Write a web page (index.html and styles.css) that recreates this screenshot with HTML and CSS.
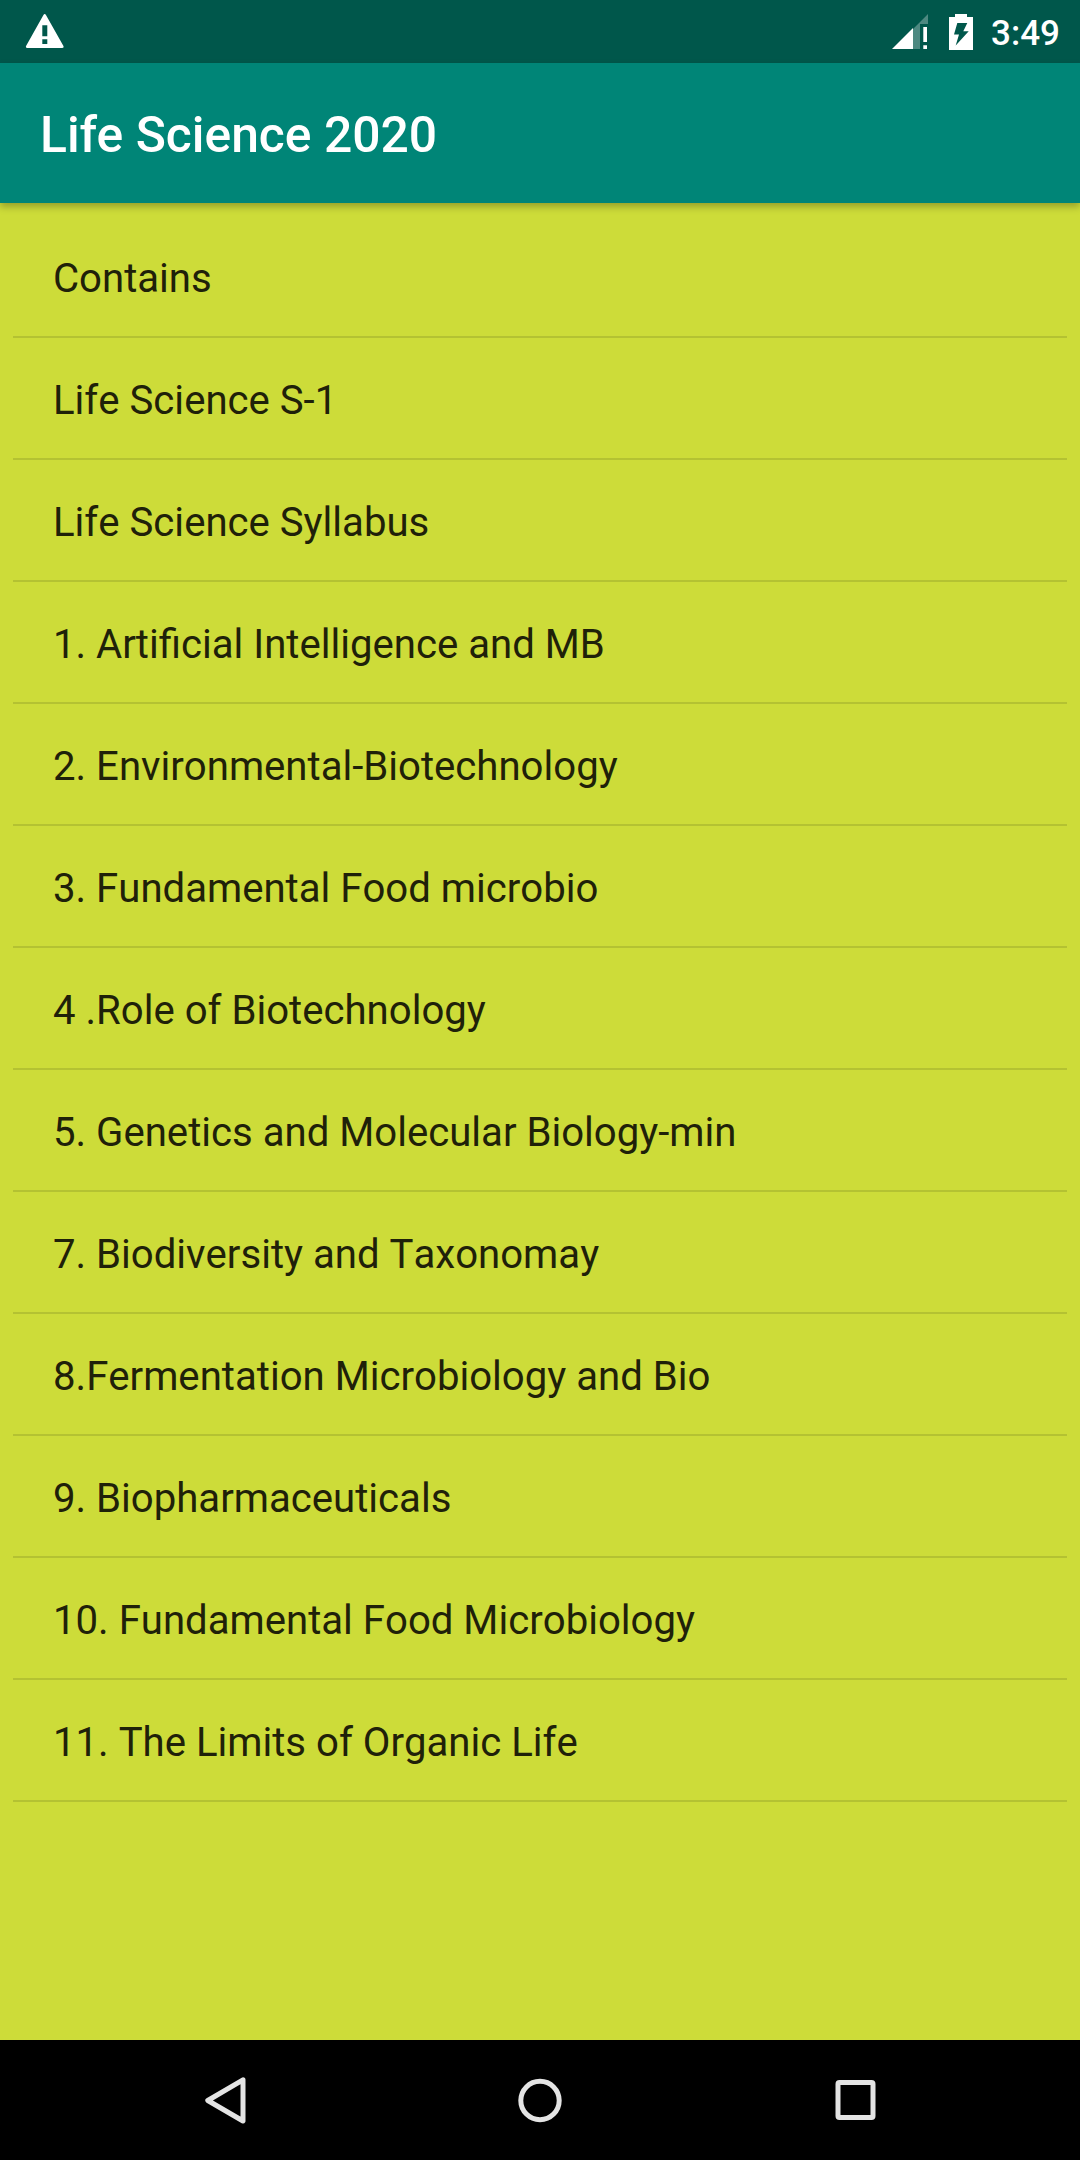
FILE: index.html
```html
<!DOCTYPE html>
<html lang="en">
<head>
    <meta charset="UTF-8">
    <meta name="viewport" content="width=device-width, initial-scale=1.0">
    <title>Life Science 2020</title>
    <link rel="stylesheet" href="styles.css">
</head>
<body>
    <div class="screen">
        <div class="status-bar">
            <svg class="icon-warning" width="40" height="36" viewBox="0 0 40 36">
                <path fill="#fff" fill-rule="evenodd" d="M18.3 1.2Q19.7 -1.2 21.1 1.2L38.3 31.8Q39.3 34 37 34H2.5Q0.2 34 1.2 31.8ZM17.3 11.3V22.3H22.3V11.3ZM17.3 25.3V30H22.3V25.3Z"/>
            </svg>
            <div class="status-right">
                <svg class="icon-signal" width="36" height="36" viewBox="0 0 36 36">
                    <path fill="#fff" fill-opacity="0.3" d="M21 15L36 0V10H28V35H21Z"/>
                    <path fill="#fff" d="M0 35L21 14V35ZM31.3 13H35V28H31.3ZM31.3 31.3H35V35H31.3Z"/>
                </svg>
                <svg class="icon-battery" width="24" height="36" viewBox="0 0 24 36">
                    <path fill="#fff" fill-rule="evenodd" d="M6 0H18V3H24V36H0V3H6ZM8.3 9H18.3L14.3 17.3H19.7L6.7 31.5L10 20.5H5Z"/>
                </svg>
                <span class="clock">3:49</span>
            </div>
        </div>

        <div class="app-bar">
            <h1>Life Science 2020</h1>
        </div>

        <ul class="list">
            <li>Contains</li>
            <li>Life Science S-1</li>
            <li>Life Science Syllabus</li>
            <li>1. Artificial Intelligence and MB</li>
            <li>2. Environmental-Biotechnology</li>
            <li>3. Fundamental Food microbio</li>
            <li>4 .Role of Biotechnology</li>
            <li>5. Genetics and Molecular Biology-min</li>
            <li>7. Biodiversity and Taxonomay</li>
            <li>8.Fermentation Microbiology and Bio</li>
            <li>9. Biopharmaceuticals</li>
            <li>10. Fundamental Food Microbiology</li>
            <li>11. The Limits of Organic Life</li>
        </ul>

        <div class="nav-bar">
            <svg width="60" height="60" viewBox="0 0 60 60">
                <path d="M48 9.8L12.8 30.5L48 51Z"/>
            </svg>
            <svg width="60" height="60" viewBox="0 0 60 60">
                <circle cx="30" cy="30.5" r="19.2"/>
            </svg>
            <svg width="60" height="60" viewBox="0 0 60 60">
                <rect x="13" y="12.5" width="35" height="35" rx="1.5"/>
            </svg>
        </div>
    </div>
</body>
</html>
```

FILE: styles.css
```css
* {
    margin: 0;
    padding: 0;
    box-sizing: border-box;
}

body {
    font-family: Roboto, "Liberation Sans", sans-serif;
    background: #cddc39;
}

.screen {
    display: flex;
    flex-direction: column;
    height: 2160px;
}

.status-bar {
    display: flex;
    align-items: center;
    justify-content: space-between;
    height: 63px;
    padding: 0 20px 0 25px;
    background: #00574b;
}

.status-right {
    display: flex;
    align-items: center;
}

.icon-signal {
    margin-right: 21px;
}

.icon-battery {
    margin-right: 18px;
}

.clock {
    color: #fff;
    font-size: 35px;
    font-weight: 500;
    padding-top: 4px;
}

.app-bar {
    display: flex;
    align-items: center;
    height: 140px;
    padding: 4px 40px 0;
    background: #008577;
    box-shadow: 0 4px 7px rgba(0, 0, 0, 0.26);
}

.app-bar h1 {
    color: #fff;
    font-size: 49.8px;
    font-weight: 500;
}

.list {
    flex: 1;
    padding: 13px;
    list-style: none;
}

.list li {
    display: flex;
    align-items: center;
    height: 122px;
    padding: 4px 40px 0;
    border-bottom: 2px solid #b4c232;
    color: #1f2109;
    font-size: 40.13px;
    font-kerning: none;
}

.nav-bar {
    display: flex;
    align-items: center;
    justify-content: space-between;
    height: 120px;
    padding: 0 195px;
    background: #000;
}

.nav-bar svg {
    fill: none;
    stroke: #e4e4e4;
    stroke-width: 5;
    stroke-linejoin: round;
}
```
